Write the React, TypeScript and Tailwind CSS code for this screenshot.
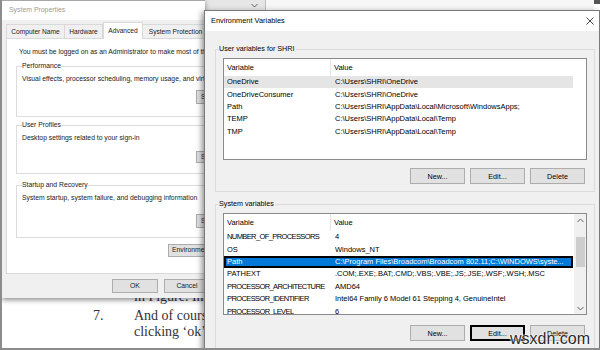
import React from "react";

type Pair = [string, string];

const userVars: Pair[] = [
  ["OneDrive", "C:\\Users\\SHRI\\OneDrive"],
  ["OneDriveConsumer", "C:\\Users\\SHRI\\OneDrive"],
  ["Path", "C:\\Users\\SHRI\\AppData\\Local\\Microsoft\\WindowsApps;"],
  ["TEMP", "C:\\Users\\SHRI\\AppData\\Local\\Temp"],
  ["TMP", "C:\\Users\\SHRI\\AppData\\Local\\Temp"],
];

const sysVars: Pair[] = [
  ["NUMBER_OF_PROCESSORS", "4"],
  ["OS", "Windows_NT"],
  ["Path", "C:\\Program Files\\Broadcom\\Broadcom 802.11;C:\\WINDOWS\\syste..."],
  ["PATHEXT", ".COM;.EXE;.BAT;.CMD;.VBS;.VBE;.JS;.JSE;.WSF;.WSH;.MSC"],
  ["PROCESSOR_ARCHITECTURE", "AMD64"],
  ["PROCESSOR_IDENTIFIER", "Intel64 Family 6 Model 61 Stepping 4, GenuineIntel"],
  ["PROCESSOR_LEVEL", "6"],
];

function Row({ name, value, state }: { name: string; value: string; state?: "sel" | "hover" }) {
  const cls =
    state === "sel"
      ? "bg-[#0078d7] text-white border-2 border-black"
      : state === "hover"
      ? "bg-[#e5e5e5] border-2 border-transparent"
      : "border-2 border-transparent";
  const narrow = name.includes("_") ? "tracking-[-0.6px]" : "";
  return (
    <div className={`flex items-center shrink-0 h-[12.4px] w-[349px] leading-[8px] ${cls}`}>
      <div className={`w-[109px] shrink-0 pl-[1px] whitespace-nowrap ${narrow}`}>{name}</div>
      <div className="whitespace-nowrap overflow-hidden">{value}</div>
    </div>
  );
}

function Chevron({ up }: { up?: boolean }) {
  return (
    <svg width="7" height="5" viewBox="0 0 7 5">
      <path d={up ? "M0.5 4 L3.5 1 L6.5 4" : "M0.5 1 L3.5 4 L6.5 1"} fill="none" stroke="#606060" strokeWidth="1" />
    </svg>
  );
}

function VarList({ rows, sel, hover, scroll }: { rows: Pair[]; sel?: number; hover?: number; scroll?: boolean }) {
  return (
    <div className="ml-[7px] w-[364px] h-[102px] bg-white border border-[#8a8a8a] flex text-black text-[7.5px]">
      <div className="flex-1 flex flex-col overflow-hidden">
        <div className="flex items-center h-[17px] shrink-0 leading-[9px]">
          <div className="w-[107px] h-full pl-[3px] flex items-center border-r border-[#e5e5e5]">Variable</div>
          <div className="pl-[3px]">Value</div>
        </div>
        {rows.map((r, i) => (
          <Row key={r[0]} name={r[0]} value={r[1]} state={i === sel ? "sel" : i === hover ? "hover" : undefined} />
        ))}
      </div>
      {scroll && (
        <div className="w-[12px] bg-[#f0f0f0] flex flex-col items-center">
          <div className="h-[12px] flex items-center justify-center">
            <Chevron up />
          </div>
          <div className="h-[11px]" />
          <div className="h-[30px] w-[9px] bg-[#cdcdcd]" />
          <div className="flex-1" />
          <div className="h-[12px] flex items-center justify-center">
            <Chevron />
          </div>
        </div>
      )}
    </div>
  );
}

function WinBtn({ label, focused }: { label: string; focused?: boolean }) {
  return (
    <div
      className={`w-[55px] h-[16px] flex items-center justify-center bg-[#e1e1e1] leading-[9px] ${
        focused ? "border-2 border-black" : "border border-[#adadad]"
      }`}
    >
      {label}
    </div>
  );
}

export default function App() {
  return (
    <div className="relative w-[600px] h-[350px] overflow-hidden bg-white border-l-2 border-b-2 border-[#8c8c8c] font-['Liberation_Sans',Arial,sans-serif] text-[7.2px] text-[#1a1a1a]">
      {/* document page behind */}
      <div className="pt-[289px] pl-[91px] font-['Liberation_Serif','Times_New_Roman',serif] text-[14px] leading-[16px] text-[#333]">
        <div className="grid grid-cols-[41px_auto] grid-rows-[19px_16px_16px]">
          <div />
          <div className="whitespace-nowrap">in Figure. In the</div>
          <div>7.</div>
          <div className="whitespace-nowrap">And of course</div>
          <div />
          <div className="whitespace-nowrap">clicking ‘ok’ buttons</div>
        </div>
      </div>

      {/* strip above env window */}
      <div className="absolute left-[202px] top-0 w-[398px] h-[10px] flex">
        <div className="w-[62px] h-full bg-[#e6e6e6] border-r border-[#bdbdbd] flex items-center justify-end pr-[7px]">
          <Chevron />
        </div>
        <div className="flex-1 bg-[#f7f7f7]" />
        <div className="w-[8px] h-[4px] bg-[#555]" />
      </div>

      {/* System Properties window */}
      <div className="absolute left-0 top-0 w-[203px] h-[298px] overflow-hidden bg-[#f0f0f0] border-t border-[#a8a8a8] shadow-[0_2px_5px_rgba(0,0,0,0.45)] flex flex-col text-[6.8px]">
        <div className="h-[19px] shrink-0 bg-white flex items-center pl-[7px] text-[6.9px] text-[#9b9b9b]">System Properties</div>
        <div className="h-[18px] shrink-0 flex items-end pl-[4px] text-[6.6px] whitespace-nowrap">
          <div className="w-[59px] shrink-0 h-[14px] bg-[#f0f0f0] border border-[#d9d9d9] border-b-0 flex items-center justify-center">Computer Name</div>
          <div className="w-[38px] shrink-0 h-[14px] bg-[#f0f0f0] border-t border-r border-[#d9d9d9] flex items-center justify-center">Hardware</div>
          <div className="w-[40px] shrink-0 h-[17px] bg-white border border-[#d9d9d9] border-b-0 flex items-center justify-center relative top-[1px] z-10">Advanced</div>
          <div className="w-[66px] shrink-0 h-[14px] bg-[#f0f0f0] border-t border-r border-[#d9d9d9] flex items-center justify-center">System Protection</div>
        </div>
        <div className="ml-[4px] w-[262px] h-[236px] shrink-0 bg-white border border-[#d9d9d9] flex flex-col">
          <div className="mt-[8px] ml-[12px] leading-[10px] whitespace-nowrap">You must be logged on as an Administrator to make most of these changes.</div>
          <div className="mt-[4px]">
            <fieldset className="ml-[9px] w-[250px] h-[56px] border border-[#dcdcdc] pl-[5px]">
              <legend className="leading-[10px]">Performance</legend>
              <div className="mt-[3px] leading-[10px] whitespace-nowrap">Visual effects, processor scheduling, memory usage, and virtual memory</div>
              <div className="mt-[6px] ml-[174px] w-[9px] h-[14px] overflow-hidden bg-[#e1e1e1] border border-[#adadad] flex items-center pl-[4px] whitespace-nowrap">Settings...</div>
            </fieldset>
          </div>
          <div className="mt-[3px]">
            <fieldset className="ml-[9px] w-[250px] h-[54px] border border-[#dcdcdc] pl-[5px]">
              <legend className="leading-[10px]">User Profiles</legend>
              <div className="mt-[3px] leading-[10px] whitespace-nowrap">Desktop settings related to your sign-in</div>
              <div className="mt-[8px] ml-[174px] w-[9px] h-[12px] overflow-hidden bg-[#e1e1e1] border border-[#adadad] flex items-center pl-[4px] whitespace-nowrap">Settings...</div>
            </fieldset>
          </div>
          <div className="mt-[6px]">
            <fieldset className="ml-[9px] w-[250px] h-[58px] border border-[#dcdcdc] pl-[5px]">
              <legend className="leading-[10px]">Startup and Recovery</legend>
              <div className="mt-[3px] leading-[10px] whitespace-nowrap">System startup, system failure, and debugging information</div>
              <div className="mt-[11px] ml-[174px] w-[9px] h-[14px] overflow-hidden bg-[#e1e1e1] border border-[#adadad] flex items-center pl-[4px] whitespace-nowrap">Settings...</div>
            </fieldset>
          </div>
          <div className="mt-[6px] ml-[161px] w-[38px] h-[13px] overflow-hidden bg-[#e1e1e1] border border-[#adadad] flex items-center pl-[3px] whitespace-nowrap">Environment Variables...</div>
        </div>
        <div className="flex-1 flex items-center gap-[6px] pl-[110px]">
          <div className="w-[46px] shrink-0 h-[14px] bg-[#e1e1e1] border border-[#adadad] flex items-center justify-center">OK</div>
          <div className="w-[46px] shrink-0 h-[14px] bg-[#e1e1e1] border border-[#adadad] flex items-center justify-center">Cancel</div>
        </div>
      </div>

      {/* Environment Variables window */}
      <div className="absolute left-[202px] top-[10px] w-[396px] h-[345px] bg-[#f0f0f0] border border-[#7a7a7a] shadow-[-2px_2px_6px_rgba(0,0,0,0.45)] flex flex-col text-black">
        <div className="h-[20px] shrink-0 bg-white flex items-center justify-between pl-[6px] pr-[5px] text-[7.4px]">
          <span>Environment Variables</span>
          <svg width="8" height="8" viewBox="0 0 8 8">
            <path d="M0.5 0.5 L7.5 7.5 M7.5 0.5 L0.5 7.5" stroke="#333" strokeWidth="0.9" />
          </svg>
        </div>
        <div className="mt-[13px]">
          <fieldset className="ml-[10px] w-[380px] h-[148px] border border-[#dcdcdc]">
            <legend className="ml-[2px] px-[1px] leading-[10px]">User variables for SHRI</legend>
            <div className="mt-[4px]">
              <VarList rows={userVars} hover={0} />
            </div>
            <div className="mt-[8px] flex justify-end gap-[5px] pr-[9px]">
              <WinBtn label="New..." />
              <WinBtn label="Edit..." />
              <WinBtn label="Delete" />
            </div>
          </fieldset>
        </div>
        <div className="mt-[7px]">
          <fieldset className="ml-[10px] w-[380px] h-[160px] border border-[#dcdcdc]">
            <legend className="ml-[2px] px-[1px] leading-[10px]">System variables</legend>
            <div className="mt-[4px]">
              <VarList rows={sysVars} sel={2} scroll />
            </div>
            <div className="mt-[10px] flex justify-end gap-[5px] pr-[9px]">
              <WinBtn label="New..." />
              <WinBtn label="Edit..." focused />
              <WinBtn label="Delete" />
            </div>
          </fieldset>
        </div>
      </div>

      {/* watermark */}
      <div className="absolute right-[10px] bottom-[1px] text-[16px] leading-[16px] text-[#2a2a2a] font-['Liberation_Sans',Arial,sans-serif] [text-shadow:0_0_2px_#fff,0_0_2px_#fff,0_0_1px_#fff]">
        wsxdn.com
      </div>
    </div>
  );
}
